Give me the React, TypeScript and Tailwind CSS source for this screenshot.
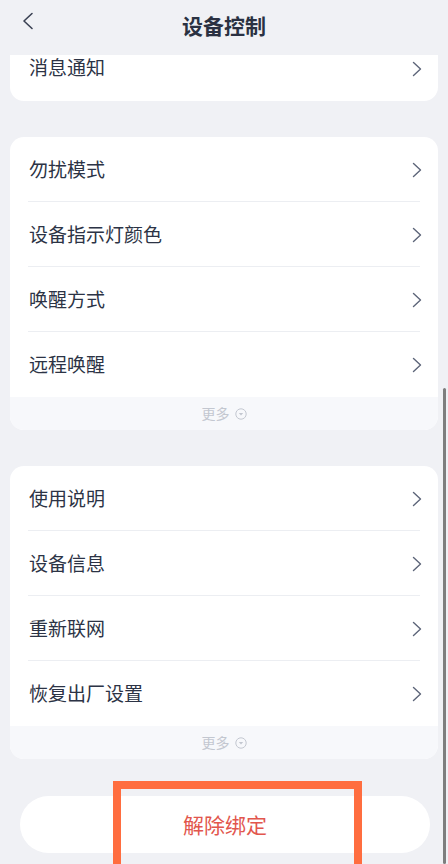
import React from 'react';

const groups: string[][] = [
  ['勿扰模式', '设备指示灯颜色', '唤醒方式', '远程唤醒'],
  ['使用说明', '设备信息', '重新联网', '恢复出厂设置'],
];

const Chevron: React.FC = () => (
  <svg width="10" height="16" viewBox="0 0 10 16" fill="none" className="shrink-0">
    <path d="M1.5 1.5L8.5 8L1.5 14.5" stroke="#5d6579" strokeWidth="1.4" strokeLinecap="round" strokeLinejoin="round" />
  </svg>
);

const Row: React.FC<{ label: string; divider: boolean }> = ({ label, divider }) => (
  <div className="relative h-[65px] flex items-center justify-between pl-[19px] pr-[16px]">
    <span className="text-[19px] text-[#2c3345]">{label}</span>
    <Chevron />
    {divider && <div className="absolute bottom-0 left-[18px] right-[18px] h-px bg-[#eceef2]" />}
  </div>
);

const More: React.FC = () => (
  <div className="h-[33px] bg-[#f7f8fb] flex items-center justify-center gap-[5px] text-[14px] text-[#c3c7d0]">
    <span>更多</span>
    <svg width="12" height="12" viewBox="0 0 12 12" fill="none">
      <circle cx="6" cy="6" r="5.2" stroke="#c3c7d0" strokeWidth="1" />
      <path d="M3.8 5L6 7.4L8.2 5Z" fill="#c3c7d0" />
    </svg>
  </div>
);

export default function App() {
  return (
    <div
      className="relative w-[448px] h-[864px] overflow-hidden bg-[#f0f1f5]"
      style={{ fontFamily: '"Noto Sans CJK SC", "Noto Sans", sans-serif' }}
    >
      <div className="h-[55px] flex items-center justify-center relative">
        <svg width="12" height="18" viewBox="0 0 12 18" fill="none" className="absolute left-[22px] top-[12px]">
          <path d="M10 1.5L2 9L10 16.5" stroke="#3a4153" strokeWidth="1.6" strokeLinecap="round" strokeLinejoin="round" />
        </svg>
        <h1 className="text-[21px] font-bold text-[#2a3142] -mt-[4px]">设备控制</h1>
      </div>

      <div className="mx-[10px] bg-white rounded-b-[14px] h-[46px] flex items-start justify-between pl-[19px] pr-[16px]">
        <span className="text-[19px] text-[#2c3345] -mt-[2px]">消息通知</span>
        <div className="mt-[6px]"><Chevron /></div>
      </div>

      {groups.map((items, gi) => (
        <div key={gi} className="mx-[10px] mt-[36px] bg-white rounded-[14px] overflow-hidden">
          {items.map((label, i) => (
            <Row key={label} label={label} divider={i < items.length - 1} />
          ))}
          <More />
        </div>
      ))}

      <button className="mx-[20px] mt-[37px] w-[410px] h-[57px] rounded-full bg-white flex items-center justify-center text-[21px] text-[#e2564d]">
        解除绑定
      </button>

      <div className="absolute left-[113px] top-[781px] w-[249px] h-[100px] border-[8px] border-[#ff6d3f]" />
      <div className="absolute right-[2px] top-[388px] w-[3px] h-[476px] bg-[#7e7e7e] rounded-full" />
    </div>
  );
}
